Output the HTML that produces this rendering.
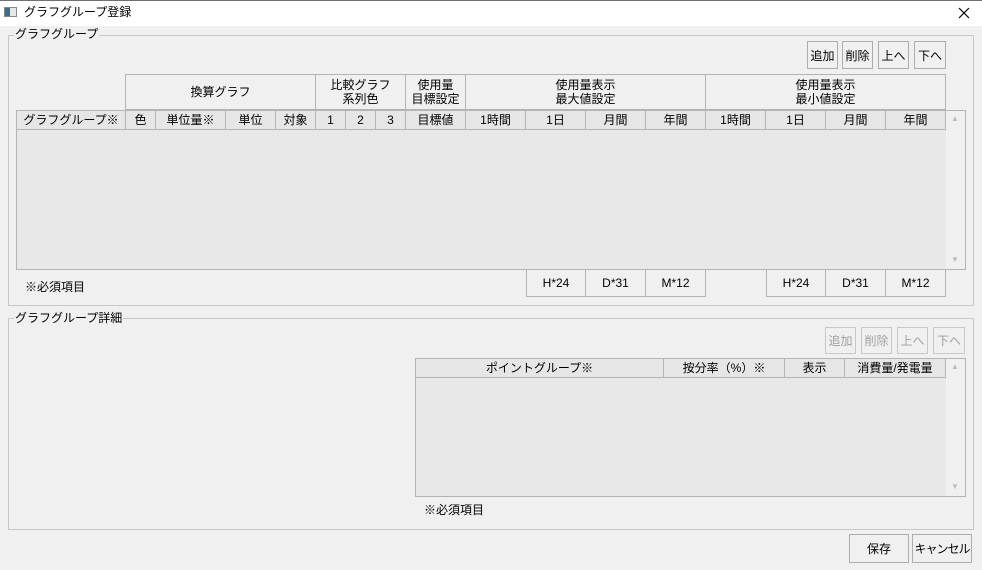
<!DOCTYPE html>
<html><head><meta charset="utf-8"><style>
*{box-sizing:border-box;margin:0;padding:0}
body{width:982px;height:570px;background:#f0f0f0;position:relative;overflow:hidden;font-family:"Liberation Sans","Noto Sans CJK JP",sans-serif;font-size:12px;color:#000}
.a{position:absolute;white-space:nowrap}
.grp{position:absolute;border:1px solid #c8c8c8}
.lbl{position:absolute;background:#f0f0f0;padding:0 1px;line-height:14px;white-space:nowrap}
.btn{position:absolute;border:1px solid #adadad;background:#f0f0f0;display:flex;align-items:center;justify-content:center;white-space:nowrap}
.dis{color:#a0a0a0;border-color:#c8c8c8}
.hc{position:absolute;border-right:1px solid #b4b4b4;border-bottom:1px solid #b4b4b4;background:#f0f0f0;display:flex;align-items:center;justify-content:center;text-align:center;line-height:14px;white-space:nowrap}
.hd{background:#e6e6e6}
</style></head><body>
<div class="a" style="left:0;top:0;width:982px;height:1px;background:#707070"></div>
<div class="a" style="left:0;top:1px;width:982px;height:25px;background:#fff"></div>
<div class="a" style="left:4px;top:7px;width:13px;height:10px;border:1px solid #888;background:linear-gradient(90deg,#3c6e8c 0 5px,#e8e8e8 5px)"></div>
<div class="a" style="left:24px;top:5px;line-height:14px">グラフグループ登録</div>
<svg class="a" style="left:958px;top:7px" width="12" height="12" viewBox="0 0 12 12"><path d="M1 1L11 11M11 1L1 11" stroke="#000" stroke-width="1.2"/></svg>

<div class="grp" style="left:8px;top:35px;width:966px;height:271px"></div>
<div class="lbl" style="left:14px;top:27px">グラフグループ</div>
<div class="btn" style="left:807px;top:41px;width:31px;height:28px">追加</div>
<div class="btn" style="left:842px;top:41px;width:31px;height:28px">削除</div>
<div class="btn" style="left:878px;top:41px;width:31px;height:28px">上へ</div>
<div class="btn" style="left:914px;top:41px;width:32px;height:28px">下へ</div>

<div class="a" style="left:125px;top:74px;width:821px;height:1px;background:#b4b4b4"></div>
<div class="a" style="left:125px;top:74px;width:1px;height:36px;background:#b4b4b4"></div>
<div class="hc" style="left:126px;top:75px;width:190px;height:35px">換算グラフ</div>
<div class="hc" style="left:316px;top:75px;width:90px;height:35px">比較グラフ<br>系列色</div>
<div class="hc" style="left:406px;top:75px;width:60px;height:35px">使用量<br>目標設定</div>
<div class="hc" style="left:466px;top:75px;width:240px;height:35px">使用量表示<br>最大値設定</div>
<div class="hc" style="left:706px;top:75px;width:240px;height:35px">使用量表示<br>最小値設定</div>

<div class="a" style="left:16px;top:110px;width:950px;height:160px;border:1px solid #b4b4b4;background:#e8e8e8"></div>
<div class="a" style="left:946px;top:111px;width:19px;height:158px;background:#f0f0f0"></div>
<div class="a" style="left:951px;top:114px;font-size:8px;color:#bbb">▲</div>
<div class="a" style="left:951px;top:255px;font-size:8px;color:#bbb">▼</div>
<div class="hc hd" style="left:17px;top:111px;width:109px;height:19px">グラフグループ※</div>
<div class="hc hd" style="left:126px;top:111px;width:30px;height:19px">色</div>
<div class="hc hd" style="left:156px;top:111px;width:70px;height:19px">単位量※</div>
<div class="hc hd" style="left:226px;top:111px;width:50px;height:19px">単位</div>
<div class="hc hd" style="left:276px;top:111px;width:40px;height:19px">対象</div>
<div class="hc hd" style="left:316px;top:111px;width:30px;height:19px">1</div>
<div class="hc hd" style="left:346px;top:111px;width:30px;height:19px">2</div>
<div class="hc hd" style="left:376px;top:111px;width:30px;height:19px">3</div>
<div class="hc hd" style="left:406px;top:111px;width:60px;height:19px">目標値</div>
<div class="hc hd" style="left:466px;top:111px;width:60px;height:19px">1時間</div>
<div class="hc hd" style="left:526px;top:111px;width:60px;height:19px">1日</div>
<div class="hc hd" style="left:586px;top:111px;width:60px;height:19px">月間</div>
<div class="hc hd" style="left:646px;top:111px;width:60px;height:19px">年間</div>
<div class="hc hd" style="left:706px;top:111px;width:60px;height:19px">1時間</div>
<div class="hc hd" style="left:766px;top:111px;width:60px;height:19px">1日</div>
<div class="hc hd" style="left:826px;top:111px;width:60px;height:19px">月間</div>
<div class="hc hd" style="left:886px;top:111px;width:60px;height:19px">年間</div>

<div class="a" style="left:526px;top:269px;width:1px;height:28px;background:#b4b4b4"></div>
<div class="hc" style="left:527px;top:270px;width:59px;height:27px">H*24</div>
<div class="hc" style="left:586px;top:270px;width:60px;height:27px">D*31</div>
<div class="hc" style="left:646px;top:270px;width:60px;height:27px">M*12</div>
<div class="a" style="left:766px;top:269px;width:1px;height:28px;background:#b4b4b4"></div>
<div class="hc" style="left:767px;top:270px;width:59px;height:27px">H*24</div>
<div class="hc" style="left:826px;top:270px;width:60px;height:27px">D*31</div>
<div class="hc" style="left:886px;top:270px;width:60px;height:27px">M*12</div>
<div class="a" style="left:25px;top:280px;line-height:14px">※必須項目</div>

<div class="grp" style="left:8px;top:318px;width:966px;height:212px"></div>
<div class="lbl" style="left:14px;top:311px">グラフグループ詳細</div>
<div class="btn dis" style="left:825px;top:327px;width:31px;height:27px">追加</div>
<div class="btn dis" style="left:861px;top:327px;width:31px;height:27px">削除</div>
<div class="btn dis" style="left:897px;top:327px;width:31px;height:27px">上へ</div>
<div class="btn dis" style="left:933px;top:327px;width:32px;height:27px">下へ</div>

<div class="a" style="left:415px;top:358px;width:551px;height:139px;border:1px solid #b4b4b4;background:#e8e8e8"></div>
<div class="a" style="left:946px;top:359px;width:19px;height:137px;background:#f0f0f0"></div>
<div class="a" style="left:951px;top:362px;font-size:8px;color:#bbb">▲</div>
<div class="a" style="left:951px;top:482px;font-size:8px;color:#bbb">▼</div>
<div class="hc hd" style="left:416px;top:359px;width:248px;height:19px">ポイントグループ※</div>
<div class="hc hd" style="left:664px;top:359px;width:121px;height:19px">按分率（%）※</div>
<div class="hc hd" style="left:785px;top:359px;width:60px;height:19px">表示</div>
<div class="hc hd" style="left:845px;top:359px;width:101px;height:19px">消費量/発電量</div>
<div class="a" style="left:424px;top:503px;line-height:14px">※必須項目</div>

<div class="btn" style="left:849px;top:534px;width:60px;height:29px">保存</div>
<div class="btn" style="left:912px;top:534px;width:60px;height:29px;letter-spacing:-1px">キャンセル</div>
</body></html>
